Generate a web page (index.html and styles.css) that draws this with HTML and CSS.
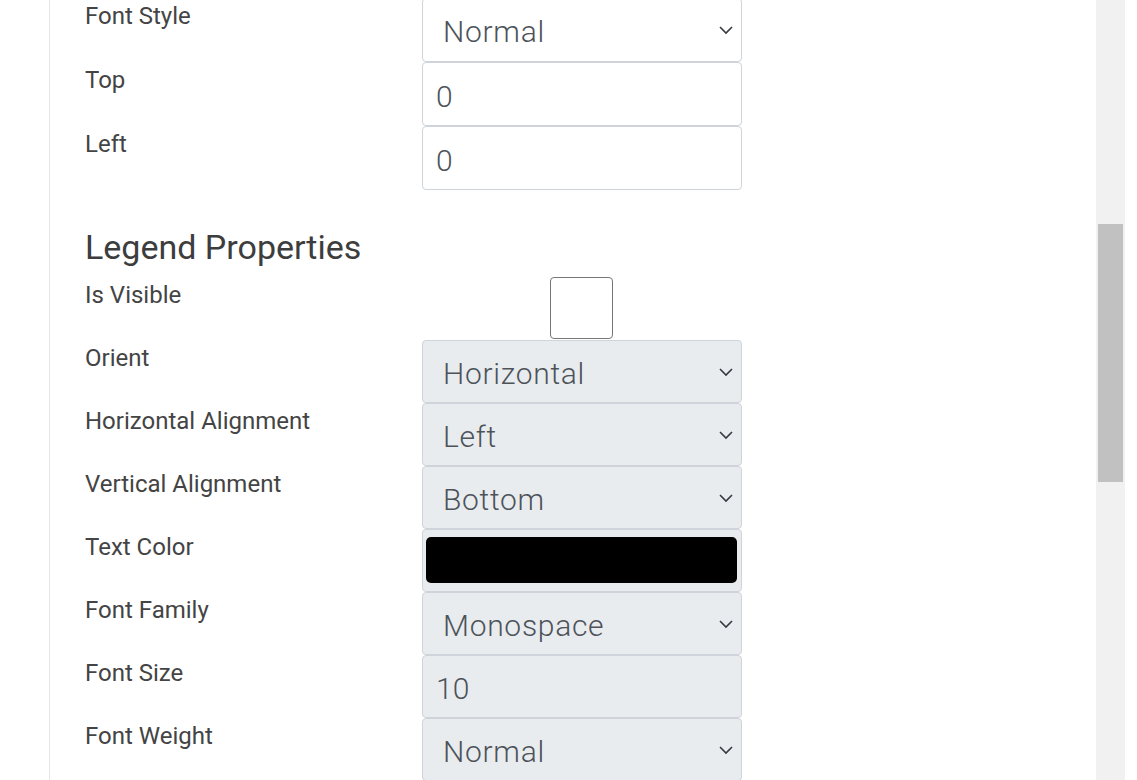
FILE: index.html
```html
<!DOCTYPE html>
<html>
<head>
<meta charset="utf-8">
<link rel="stylesheet" href="styles.css">
</head>
<body>
<div class="frame">
  <div class="gutter"></div>
  <main class="panel">
    <div class="form first">
      <div class="row"><label class="lbl">Font Style</label>
        <select class="ctl sel"><option>Normal</option></select></div>
      <div class="row"><label class="lbl">Top</label>
        <input class="ctl inp" type="text" value="0"></div>
      <div class="row"><label class="lbl">Left</label>
        <input class="ctl inp" type="text" value="0"></div>
    </div>
    <h2 class="section-title">Legend Properties</h2>
    <div class="form">
      <div class="row"><label class="lbl">Is Visible</label>
        <div class="check-cell"><input class="check" type="checkbox"></div></div>
      <div class="row"><label class="lbl">Orient</label>
        <select class="ctl sel" disabled><option>Horizontal</option></select></div>
      <div class="row"><label class="lbl">Horizontal Alignment</label>
        <select class="ctl sel" disabled><option>Left</option></select></div>
      <div class="row"><label class="lbl">Vertical Alignment</label>
        <select class="ctl sel" disabled><option>Bottom</option></select></div>
      <div class="row"><label class="lbl">Text Color</label>
        <div class="ctl color-box"><div class="swatch"></div></div></div>
      <div class="row"><label class="lbl">Font Family</label>
        <select class="ctl sel" disabled><option>Monospace</option></select></div>
      <div class="row"><label class="lbl">Font Size</label>
        <input class="ctl inp" type="text" value="10" disabled></div>
      <div class="row"><label class="lbl">Font Weight</label>
        <select class="ctl sel" disabled><option>Normal</option></select></div>
    </div>
  </main>
  <div class="scrollbar"><div class="thumb"></div></div>
  <div class="edge"></div>
</div>
</body>
</html>
```
FILE: styles.css
```css
* { box-sizing: border-box; }
html, body { margin: 0; padding: 0; background: #fff; }
body {
  font-family: Roboto, "Liberation Sans", Arial, sans-serif;
  color: #3b3b3b;
  overflow: hidden;
}
.frame {
  display: flex;
  height: 780px;
  overflow: hidden;
}
.gutter { width: 49px; flex: none; }
.panel {
  width: 1047px;
  flex: none;
  border-left: 1px solid #e6e6e6;
  padding-left: 35px;
  overflow: hidden;
}
.scrollbar {
  width: 29px;
  flex: none;
  background: #f1f1f1;
  padding: 224px 2px 0 2px;
}
.thumb { height: 258px; background: #c1c1c1; }
.edge { flex: 1; }

.form {
  display: grid;
  grid-template-columns: 337px 320px;
  grid-auto-rows: 63px;
}
.form.first { margin-top: -2px; grid-auto-rows: 64px; }
.form.first .ctl { height: 64px; }
.row { display: contents; }
.lbl {
  font-size: 24px;
  line-height: 37px;
  font-weight: 400;
  color: #444;
}
.section-title {
  font-size: 34px;
  font-weight: 400;
  line-height: 41px;
  margin: 37px 0 9px 0;
  color: #3d3d3d;
}
.ctl {
  width: 320px;
  height: 63px;
  border: 1px solid #ced4da;
  border-radius: 4px;
  background-color: #fff;
  color: #4d5359;
  font-family: Roboto, "Liberation Sans", Arial, sans-serif;
  font-weight: 300;
  margin: 0;
}
.sel {
  appearance: none;
  -webkit-appearance: none;
  font-size: 30px;
  letter-spacing: 0.7px;
  padding: 3px 40px 0 20px;
  background-image: url("data:image/svg+xml,%3Csvg xmlns='http://www.w3.org/2000/svg' width='16' height='10' viewBox='0 0 16 10'%3E%3Cpath d='M2 2l6 6 6-6' fill='none' stroke='%23343a40' stroke-width='1.6'/%3E%3C/svg%3E");
  background-repeat: no-repeat;
  background-position: right 7px center;
  background-size: 16px 10px;
  opacity: 1;
}
.inp {
  font-size: 30px;
  padding: 4px 13px 0 13px;
  outline: none;
}
.ctl:disabled, .color-box { background-color: #e9ecef; color: #4d5359; opacity: 1; }
.check-cell {
  display: flex;
  justify-content: center;
  align-items: flex-start;
}
.check {
  appearance: none;
  -webkit-appearance: none;
  width: 63px;
  height: 62px;
  margin: 0 0 0 -2px;
  border: 1px solid #767676;
  border-radius: 4px;
  background: #fff;
}
.color-box { padding: 7px 4px 8px 3px; }
.swatch { height: 100%; background: #000; border-radius: 5px; }
```
